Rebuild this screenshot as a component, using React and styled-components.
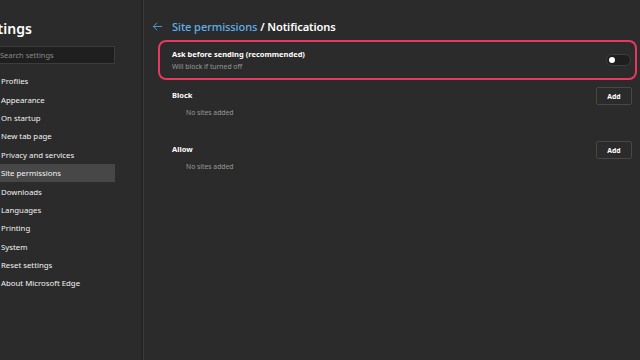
import React from "react";
import styled, { createGlobalStyle } from "styled-components";

const Global = createGlobalStyle`
  html, body { margin: 0; padding: 0; background: #2b2b2b; }
  body { font-family: "Noto Sans", "Open Sans", sans-serif; color: #ffffff; }
  * { box-sizing: border-box; }
`;

const Page = styled.div`
  display: flex;
  width: 640px;
  height: 360px;
  overflow: hidden;
  background: #2b2b2b;
`;

const Sidebar = styled.aside`
  width: 144px;
  flex: none;
  overflow: hidden;
  border-right: 1px solid #3a3a3a;
  box-shadow: inset -2px 0 0 #242424;
`;

const SideInner = styled.div`
  margin-left: -20px;
  width: 135px;
  display: flex;
  flex-direction: column;
  padding-top: 17px;
`;

const Title = styled.h1`
  margin: 0 0 0 -4px;
  font-size: 14px;
  line-height: 24px;
  font-weight: 600;
  color: #ffffff;
`;

const Search = styled.div`
  margin-top: 5px;
  height: 18px;
  background: #1f1f1f;
  border: 1px solid #3c3c3c;
  display: flex;
  align-items: center;
  padding-left: 19px;
  font-size: 7.5px;
  color: #8a8a8a;
`;

const Nav = styled.nav`
  margin-top: 8px;
  display: flex;
  flex-direction: column;
`;

const NavItem = styled.div`
  height: 18.4px;
  display: flex;
  align-items: center;
  padding-left: 21px;
  font-size: 7.8px;
  color: #f2f2f2;
  background: ${(p) => (p.$active ? "#474747" : "transparent")};
`;

const Main = styled.main`
  flex: 1;
  padding: 16px 3px 0 8px;
  display: flex;
  flex-direction: column;
`;

const Header = styled.div`
  display: flex;
  align-items: center;
  gap: 9px;
  height: 20px;
`;

const BackArrow = styled.svg`
  width: 11px;
  height: 11px;
  flex: none;
`;

const Crumb = styled.div`
  font-size: 11.1px;
  font-weight: 600;
  letter-spacing: -0.1px;
  color: #ffffff;
`;

const CrumbLink = styled.span`
  color: #5eb0ea;
  font-weight: 500;
`;

const Body = styled.div`
  margin-left: 6px;
  margin-top: 4px;
  display: flex;
  flex-direction: column;
`;

const Highlight = styled.div`
  height: 40px;
  border: 2px solid #e8385f;
  border-radius: 8px;
  display: flex;
  align-items: center;
  justify-content: space-between;
  padding: 0 4px 0 12px;
`;

const TextCol = styled.div`
  display: flex;
  flex-direction: column;
  gap: 3px;
`;

const Label = styled.div`
  font-size: 7.5px;
  font-weight: 700;
  color: #ffffff;
  line-height: 10px;
`;

const Sub = styled.div`
  font-size: 6.8px;
  color: #9a9a9a;
  line-height: 9px;
  padding-left: ${(p) => (p.$indent ? "14px" : "0")};
`;

const Toggle = styled.div`
  width: 25px;
  height: 12px;
  border-radius: 6px;
  background: #1e1e1e;
  border: 1px solid #3e3e3e;
  display: flex;
  align-items: center;
  padding-left: 2px;
`;

const Knob = styled.div`
  width: 6px;
  height: 6px;
  border-radius: 50%;
  background: #ffffff;
`;

const Section = styled.div`
  display: flex;
  justify-content: space-between;
  align-items: flex-start;
  padding: 0 5px 0 14px;
  height: 54px;
`;

const SectionText = styled.div`
  display: flex;
  flex-direction: column;
  gap: 8px;
  padding-top: 10px;
`;

const AddButton = styled.button`
  margin-top: 7px;
  width: 36px;
  height: 18px;
  background: #2b2b2b;
  border: 1px solid #474747;
  border-radius: 2px;
  color: #ffffff;
  font-family: inherit;
  font-size: 6.8px;
  font-weight: 700;
  padding: 0;
`;

const navItems = [
  "Profiles",
  "Appearance",
  "On startup",
  "New tab page",
  "Privacy and services",
  "Site permissions",
  "Downloads",
  "Languages",
  "Printing",
  "System",
  "Reset settings",
  "About Microsoft Edge",
];

export default function App() {
  return (
    <>
      <Global />
      <Page>
        <Sidebar>
          <SideInner>
            <Title>Settings</Title>
            <Search>Search settings</Search>
            <Nav>
              {navItems.map((n) => (
                <NavItem key={n} $active={n === "Site permissions"}>
                  {n}
                </NavItem>
              ))}
            </Nav>
          </SideInner>
        </Sidebar>
        <Main>
          <Header>
            <BackArrow viewBox="0 0 12 12">
              <path
                d="M11 6H1.5M5.5 2L1.5 6l4 4"
                fill="none"
                stroke="#4fa3dc"
                strokeWidth="1"
              />
            </BackArrow>
            <Crumb>
              <CrumbLink>Site permissions</CrumbLink> / Notifications
            </Crumb>
          </Header>
          <Body>
            <Highlight>
              <TextCol>
                <Label>Ask before sending (recommended)</Label>
                <Sub>Will block if turned off</Sub>
              </TextCol>
              <Toggle>
                <Knob />
              </Toggle>
            </Highlight>
            <Section>
              <SectionText>
                <Label>Block</Label>
                <Sub $indent>No sites added</Sub>
              </SectionText>
              <AddButton>Add</AddButton>
            </Section>
            <Section>
              <SectionText>
                <Label>Allow</Label>
                <Sub $indent>No sites added</Sub>
              </SectionText>
              <AddButton>Add</AddButton>
            </Section>
          </Body>
        </Main>
      </Page>
    </>
  );
}
